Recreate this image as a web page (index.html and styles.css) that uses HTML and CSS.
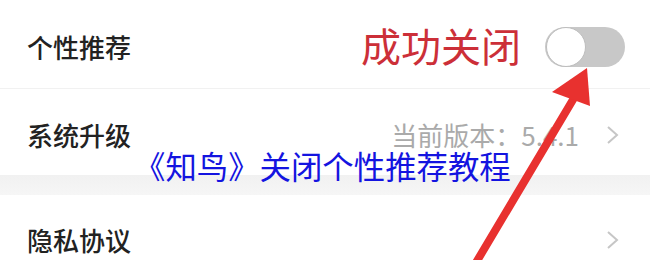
FILE: index.html
```html
<!DOCTYPE html>
<html lang="zh-CN">
<head>
<meta charset="utf-8">
<link rel="stylesheet" href="styles.css">
</head>
<body>
<div class="page">
  <div class="row row-first">
    <span class="label">个性推荐</span>
    <div class="right">
      <span class="status">成功关闭</span>
      <span class="toggle"><span class="knob"></span></span>
    </div>
  </div>
  <div class="row row-second">
    <span class="label">系统升级</span>
    <div class="right">
      <span class="version">当前版本：5.4.1</span>
      <svg class="chev" width="13" height="20" viewBox="0 0 13 20"><polyline points="2,2 11,10 2,18" fill="none" stroke="#c6c6c6" stroke-width="2"/></svg>
    </div>
  </div>
  <div class="band"></div>
  <div class="row row-third">
    <span class="label">隐私协议</span>
    <div class="right">
      <svg class="chev" width="13" height="20" viewBox="0 0 13 20"><polyline points="2,2 11,10 2,18" fill="none" stroke="#c6c6c6" stroke-width="2"/></svg>
    </div>
  </div>
  <div class="caption">《知鸟》关闭个性推荐教程</div>
  <svg class="arrow" width="650" height="260" viewBox="0 0 650 260">
    <line x1="474" y1="266" x2="574" y2="98" stroke="#e8312f" stroke-width="8" stroke-linecap="round"/>
    <polygon points="587,68 552,92 590,106" fill="#e8312f"/>
  </svg>
</div>
</body>
</html>
```

FILE: styles.css
```css
html, body {
  margin: 0;
  padding: 0;
  background: #fff;
}
.page {
  position: relative;
  width: 650px;
  height: 260px;
  overflow: hidden;
  display: flex;
  flex-direction: column;
  font-family: "Noto Sans CJK SC", "Noto Sans", sans-serif;
}
.row {
  display: flex;
  align-items: center;
  justify-content: space-between;
  padding: 0 25px 0 27px;
  flex-shrink: 0;
  box-sizing: border-box;
}
.row-first {
  height: 89px;
  padding-top: 5px;
  border-bottom: 1px solid #f1f1f1;
}
.row-second {
  height: 86px;
  padding-top: 6px;
  padding-right: 31px;
}
.row-third {
  height: 90px;
  padding-right: 31px;
}
.band {
  height: 20px;
  flex-shrink: 0;
  background: linear-gradient(#f1f1f1, #f6f6f6);
}
.label {
  font-size: 26px;
  font-weight: 500;
  color: #222;
  line-height: 1;
}
.right {
  display: flex;
  align-items: center;
}
.status {
  font-size: 40px;
  line-height: 1;
  color: #cc2f38;
  margin-right: 24px;
  margin-top: -4px;
  text-shadow: 0 0 2px #fff, 0 0 2px #fff;
}
.toggle {
  position: relative;
  display: block;
  width: 80px;
  height: 40px;
  border-radius: 20px;
  background: #c8c8c8;
}
.knob {
  position: absolute;
  left: 1px;
  top: 0;
  width: 38px;
  height: 38px;
  border-radius: 50%;
  background: #fff;
  border: 1px solid #bdbdbd;
}
.version {
  font-size: 26px;
  color: #aaaaaa;
  line-height: 1;
  margin-right: 27px;
}
.chev {
  display: block;
}
.caption {
  position: absolute;
  left: 134px;
  top: 149px;
  font-size: 31.4px;
  line-height: 1.1;
  color: #1414e0;
  white-space: nowrap;
}
.arrow {
  position: absolute;
  left: 0;
  top: 0;
}
```
